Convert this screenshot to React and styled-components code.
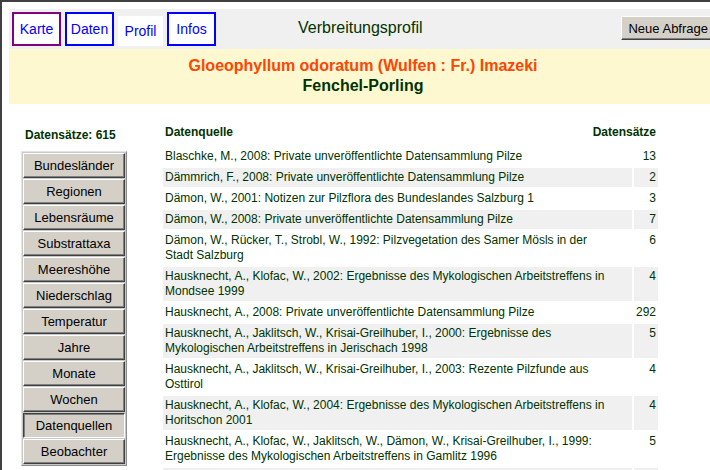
import React from 'react';
import styled, { createGlobalStyle } from 'styled-components';

const GlobalStyle = createGlobalStyle`
  html, body {
    margin: 0;
    padding: 0;
    background: #ffffff;
    overflow: hidden;
  }
  body {
    font-family: "Liberation Sans", Arial, sans-serif;
  }
`;

const Frame = styled.div`
  border-top: 2px solid #404040;
  border-left: 2px solid #404040;
  height: 100vh;
  box-sizing: border-box;
  padding: 7px 0 0 7px;
  width: 740px;
`;

const Page = styled.div`
  width: 708px;
`;

const TopBar = styled.div`
  display: flex;
  align-items: flex-end;
  gap: 4px;
  height: 40px;
  box-sizing: border-box;
  padding: 0 2px 3px 3px;
  background: #f0f0f0;
`;

const Tab = styled.a`
  display: flex;
  align-items: center;
  justify-content: center;
  box-sizing: border-box;
  width: ${p => (p.$active ? '45px' : '49px')};
  height: ${p => (p.$active ? '30px' : '34px')};
  border: ${p => (p.$active ? 'none' : `2px solid ${p.$visited ? '#800080' : '#0000ff'}`)};
  background: #ffffff;
  color: #0000ff;
  font-size: 14px;
  text-decoration: none;
`;

const PageTitle = styled.div`
  align-self: center;
  margin-left: 78px;
  padding-top: 1px;
  font-size: 16px;
  color: #003300;
`;

const QueryButton = styled.button`
  align-self: center;
  margin-left: auto;
  margin-top: 1px;
  height: 24px;
  padding: 0 6px;
  font-family: "Liberation Sans", Arial, sans-serif;
  font-size: 13px;
  font-weight: 400;
  color: #000000;
  background: #d4d0c8;
  border: 1px solid;
  border-color: #ffffff #404040 #404040 #ffffff;
  box-shadow: inset -1px -1px #808080;
`;

const SpeciesBand = styled.div`
  height: 55px;
  box-sizing: border-box;
  padding-top: 7px;
  background: #fdf8d0;
  text-align: center;
  font-weight: bold;
  font-size: 16px;
  line-height: 20px;
`;

const Latin = styled.div`
  color: #ff4500;
`;

const Common = styled.div`
  color: #003300;
`;

const Main = styled.div`
  display: flex;
  gap: 34px;
  padding-left: 12px;
`;

const Side = styled.div`
  display: flex;
  flex-direction: column;
  width: 106px;
`;

const Count = styled.div`
  margin-top: 23px;
  padding-left: 4px;
  line-height: 16px;
  font-size: 12px;
  font-weight: bold;
  color: #003300;
`;

const ButtonPanel = styled.div`
  display: flex;
  flex-direction: column;
  gap: 1px;
  margin-top: 8px;
  padding: 1px;
  width: 106px;
  box-sizing: border-box;
  background: #c8c8c8;
  border: 1px solid;
  border-color: #e4e4e4 #8c8c8c #8c8c8c #e4e4e4;
`;

const NavButton = styled.button`
  height: 25px;
  padding: 0;
  font-family: "Liberation Sans", Arial, sans-serif;
  font-size: 13px;
  font-weight: 400;
  color: #000000;
  background: #d4d0c8;
  border: 1px solid;
  border-color: ${p => (p.$pressed ? '#404040 #ffffff #ffffff #404040' : '#ffffff #404040 #404040 #ffffff')};
  box-shadow: ${p => (p.$pressed ? 'inset 1px 1px #808080' : 'inset -1px -1px #808080')};
`;

const Content = styled.div`
  width: 499px;
`;

const TableHead = styled.div`
  display: flex;
  justify-content: space-between;
  margin-top: 20px;
  padding: 0 4px 0 4px;
  line-height: 16px;
  font-size: 12px;
  font-weight: bold;
  color: #003300;
`;

const SourceTable = styled.table`
  margin-top: 5px;
  width: 100%;
  border-collapse: separate;
  border-spacing: 2px;
  font-size: 12px;
  line-height: 15px;
  color: #003300;
`;

const Row = styled.tr`
  background: ${p => (p.$shaded ? '#f0f0f0' : 'transparent')};
`;

const SourceCell = styled.td`
  padding: 2px 2px 2px 2px;
  vertical-align: top;
  white-space: nowrap;
`;

const NumberCell = styled.td`
  width: 19px;
  padding: 2px 2px 2px 2px;
  vertical-align: top;
  text-align: right;
`;

const tabs = [
  { label: 'Karte', visited: true },
  { label: 'Daten' },
  { label: 'Profil', active: true },
  { label: 'Infos' },
];

const navItems = [
  'Bundesländer',
  'Regionen',
  'Lebensräume',
  'Substrattaxa',
  'Meereshöhe',
  'Niederschlag',
  'Temperatur',
  'Jahre',
  'Monate',
  'Wochen',
  'Datenquellen',
  'Beobachter',
];

const sources = [
  { lines: ['Blaschke, M., 2008: Private unveröffentlichte Datensammlung Pilze'], count: 13 },
  { lines: ['Dämmrich, F., 2008: Private unveröffentlichte Datensammlung Pilze'], count: 2 },
  { lines: ['Dämon, W., 2001: Notizen zur Pilzflora des Bundeslandes Salzburg 1'], count: 3 },
  { lines: ['Dämon, W., 2008: Private unveröffentlichte Datensammlung Pilze'], count: 7 },
  { lines: ['Dämon, W., Rücker, T., Strobl, W., 1992: Pilzvegetation des Samer Mösls in der', 'Stadt Salzburg'], count: 6 },
  { lines: ['Hausknecht, A., Klofac, W., 2002: Ergebnisse des Mykologischen Arbeitstreffens in', 'Mondsee 1999'], count: 4 },
  { lines: ['Hausknecht, A., 2008: Private unveröffentlichte Datensammlung Pilze'], count: 292 },
  { lines: ['Hausknecht, A., Jaklitsch, W., Krisai-Greilhuber, I., 2000: Ergebnisse des', 'Mykologischen Arbeitstreffens in Jerischach 1998'], count: 5 },
  { lines: ['Hausknecht, A., Jaklitsch, W., Krisai-Greilhuber, I., 2003: Rezente Pilzfunde aus', 'Osttirol'], count: 4 },
  { lines: ['Hausknecht, A., Klofac, W., 2004: Ergebnisse des Mykologischen Arbeitstreffens in', 'Horitschon 2001'], count: 4 },
  { lines: ['Hausknecht, A., Klofac, W., Jaklitsch, W., Dämon, W., Krisai-Greilhuber, I., 1999:', 'Ergebnisse des Mykologischen Arbeitstreffens in Gamlitz 1996'], count: 5 },
  { lines: ['Hausknecht, A., Krisai-Greilhuber, I., 2006: Pilzfunde aus Kärnten'], count: 3 },
];

const App = () => {
  return (
    <>
      <GlobalStyle />
      <Frame>
        <Page>
          <TopBar>
            {tabs.map((tab) => (
              <Tab key={tab.label} $active={tab.active} $visited={tab.visited}>
                {tab.label}
              </Tab>
            ))}
            <PageTitle>Verbreitungsprofil</PageTitle>
            <QueryButton>Neue Abfrage</QueryButton>
          </TopBar>

          <SpeciesBand>
            <Latin>Gloeophyllum odoratum (Wulfen : Fr.) Imazeki</Latin>
            <Common>Fenchel-Porling</Common>
          </SpeciesBand>

          <Main>
            <Side>
              <Count>Datensätze: 615</Count>
              <ButtonPanel>
                {navItems.map((item) => (
                  <NavButton key={item} $pressed={item === 'Datenquellen'}>
                    {item}
                  </NavButton>
                ))}
              </ButtonPanel>
            </Side>

            <Content>
              <TableHead>
                <span>Datenquelle</span>
                <span>Datensätze</span>
              </TableHead>
              <SourceTable>
                <tbody>
                  {sources.map((src, i) => (
                    <Row key={i} $shaded={i % 2 === 1}>
                      <SourceCell>
                        {src.lines.map((line, j) => (
                          <div key={j}>{line}</div>
                        ))}
                      </SourceCell>
                      <NumberCell>{src.count}</NumberCell>
                    </Row>
                  ))}
                </tbody>
              </SourceTable>
            </Content>
          </Main>
        </Page>
      </Frame>
    </>
  );
};

export default App;
